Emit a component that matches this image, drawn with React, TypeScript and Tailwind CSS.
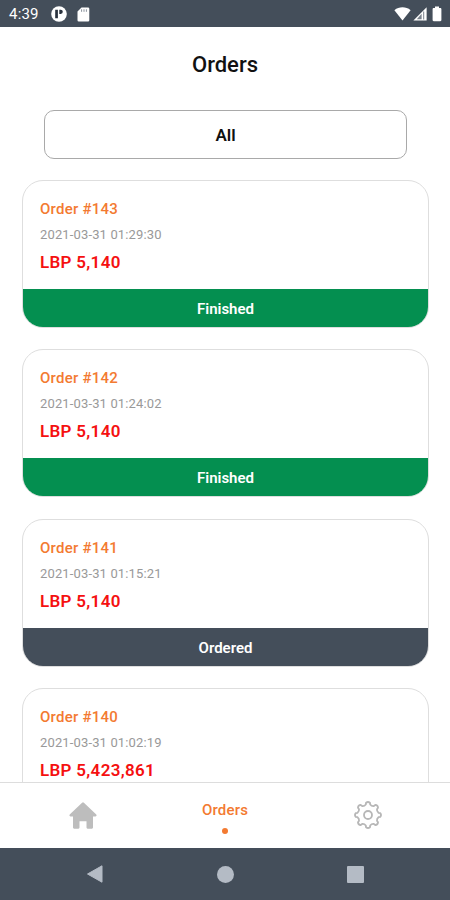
type Order = { id: number; date: string; amount: string; status?: 'Finished' | 'Ordered' };

const orders: Order[] = [
  { id: 143, date: '2021-03-31 01:29:30', amount: '5,140', status: 'Finished' },
  { id: 142, date: '2021-03-31 01:24:02', amount: '5,140', status: 'Finished' },
  { id: 141, date: '2021-03-31 01:15:21', amount: '5,140', status: 'Ordered' },
  { id: 140, date: '2021-03-31 01:02:19', amount: '5,423,861' },
];

const statusColor = { Finished: 'bg-[#048f50]', Ordered: 'bg-[#444e5a]' };

// Eight-toothed gear outline, centred on the origin.
function gearPath() {
  const p = (r: number, deg: number) => {
    const a = (deg * Math.PI) / 180;
    return `${(r * Math.sin(a)).toFixed(2)} ${(-r * Math.cos(a)).toFixed(2)}`;
  };
  let d = `M${p(12.4, -9)}`;
  for (let t = 0; t < 360; t += 45) {
    d += `Q${p(13.8, t)} ${p(12.4, t + 9)}L${p(10.7, t + 12)}Q${p(9.4, t + 22.5)} ${p(10.7, t + 33)}L${p(12.4, t + 36)}`;
  }
  return d + 'Z';
}

function StatusBar() {
  return (
    <header className="flex h-[27px] shrink-0 items-center bg-[#444e5a] pt-px pl-[9px] pr-[8px] text-white">
      <span className="w-[42px] text-[15px] leading-none tracking-[0.2px]">4:39</span>
      <svg width="16" height="16" viewBox="0 0 16 16">
        <circle cx="8" cy="8" r="7.8" fill="currentColor" />
        <path d="M4.2 3.7h2.7v8.6H4.2zM8.3 3.7h1.4a2.1 2.1 0 0 1 0 4.2H8.3z" fill="#29313d" />
      </svg>
      <svg className="ml-[10px]" width="13" height="15" viewBox="0 0 13 15">
        <path d="M4.5.4H11a1.3 1.3 0 0 1 1.3 1.3v11.5a1.3 1.3 0 0 1-1.3 1.3H1.8a1.3 1.3 0 0 1-1.3-1.3V4.4z" fill="currentColor" />
        <path d="M4.6 2.3v2.5M7 2.3v2.5M9.4 2.3v2.5" stroke="#8a929c" strokeWidth="1" />
      </svg>
      <svg className="ml-auto" width="17" height="14" viewBox="0 0 17 14">
        <path d="M.4 3.2C5-.6 12-.6 16.6 3.2L8.5 13.6z" fill="currentColor" />
      </svg>
      <svg className="ml-[2px]" width="14" height="14" viewBox="0 0 14 14">
        <path d="M13.6.3v13.3H.4z" fill="currentColor" />
        <path d="M8.600 6.800v5.400H3.800z" fill="#7a828c" />
        <path d="M10.700 4.500v8" stroke="#7a828c" strokeWidth="1" />
      </svg>
      <svg className="ml-[5px]" width="10" height="16" viewBox="0 0 10 16">
        <path d="M3 .5h4V2h1.3c.6 0 1.1.5 1.1 1.1v11c0 .6-.5 1.1-1.1 1.1H1.7c-.6 0-1.1-.5-1.1-1.1v-11C.6 2.5 1.1 2 1.7 2H3z" fill="currentColor" />
      </svg>
    </header>
  );
}

function OrderCard({ order }: { order: Order }) {
  return (
    <article className="flex h-[148px] shrink-0 flex-col overflow-hidden rounded-[21px] border border-[#dedede] bg-white">
      <div className="flex h-[108px] flex-col pl-[17px] pt-[18px]">
        <h2 className="text-[15px] leading-[20px] font-medium tracking-[0.25px] text-[#f37a31]">Order #{order.id}</h2>
        <p className="mt-[7px] text-[13px] leading-[18px] tracking-[0.14px] text-[#999999]">{order.date}</p>
        <p className="mt-[7px] text-[17px] leading-[22px] font-semibold tracking-[0.3px] text-[#f51010]">LBP {order.amount}</p>
      </div>
      {order.status && (
        <div className={`flex flex-1 items-center justify-center pt-[2px] text-[15px] font-semibold text-white ${statusColor[order.status]}`}>
          {order.status}
        </div>
      )}
    </article>
  );
}

function TabBar() {
  return (
    <nav className="grid h-[66px] shrink-0 grid-cols-[166px_118px_166px] border-t border-[#dddddd] bg-white">
      <button className="flex items-center justify-center">
        <svg width="30" height="30" viewBox="0 0 30 30">
          <path
            d="M14.1 1.700a1.4 1.4 0 0 1 1.8 0L28.300 13.500q1 1.400-.8 1.900H25v11.200q0 1.100-1.100 1.100h-4.300q-1.100 0-1.100-1.100v-6.300h-7v6.300q0 1.100-1.100 1.100H6.100Q5 27.700 5 26.600V15.400H2.500Q.7 14.900 1.700 13.500z"
            fill="#bdbdbd"
          />
        </svg>
      </button>
      <button className="flex flex-col items-center pt-[16.5px]">
        <span className="text-[15px] leading-[20px] font-medium tracking-[0.2px] text-[#f37a31]">Orders</span>
        <span className="mt-[8.5px] size-[6px] rounded-full bg-[#f37a31]" />
      </button>
      <button className="flex items-center justify-center pb-px pl-[2px]">
        <svg width="30" height="30" viewBox="-15 -15 30 30" fill="none" stroke="#b7b7b7" strokeWidth="1.8" strokeLinejoin="round">
          <path d={gearPath()} />
          <circle r="4" />
        </svg>
      </button>
    </nav>
  );
}

function SystemNav() {
  return (
    <footer className="grid h-[52px] shrink-0 grid-cols-[160px_130px_160px] items-center justify-items-center bg-[#444e5a]">
      <svg className="ml-[29px]" width="18" height="20" viewBox="0 0 18 20">
        <path d="M16 1.800v16.400L1.500 10z" fill="#b4bbc5" stroke="#b4bbc5" strokeLinejoin="round" />
      </svg>
      <span className="size-[17px] rounded-full bg-[#b4bbc5]" />
      <span className="mr-[30px] size-[17px] rounded-[1px] bg-[#b4bbc5]" />
    </footer>
  );
}

export default function App() {
  return (
    <div className="flex h-[900px] w-[450px] flex-col overflow-hidden bg-white font-[Roboto,sans-serif]">
      <StatusBar />
      <main className="flex min-h-0 flex-1 flex-col overflow-hidden">
        <h1 className="mt-[24px] text-center text-[22px] leading-[28px] font-medium text-[#111111]">Orders</h1>
        <button className="mr-[43px] ml-[44px] mt-[31px] h-[49px] shrink-0 rounded-[10px] border border-[#a9a9a9] pt-[3px] text-[17px] font-semibold text-[#111111]">
          All
        </button>
        <section className="mr-[21px] ml-[22px] mt-[21px] flex flex-col gap-[21.400px]">
          {orders.map((order) => (
            <OrderCard key={order.id} order={order} />
          ))}
        </section>
      </main>
      <TabBar />
      <SystemNav />
    </div>
  );
}
